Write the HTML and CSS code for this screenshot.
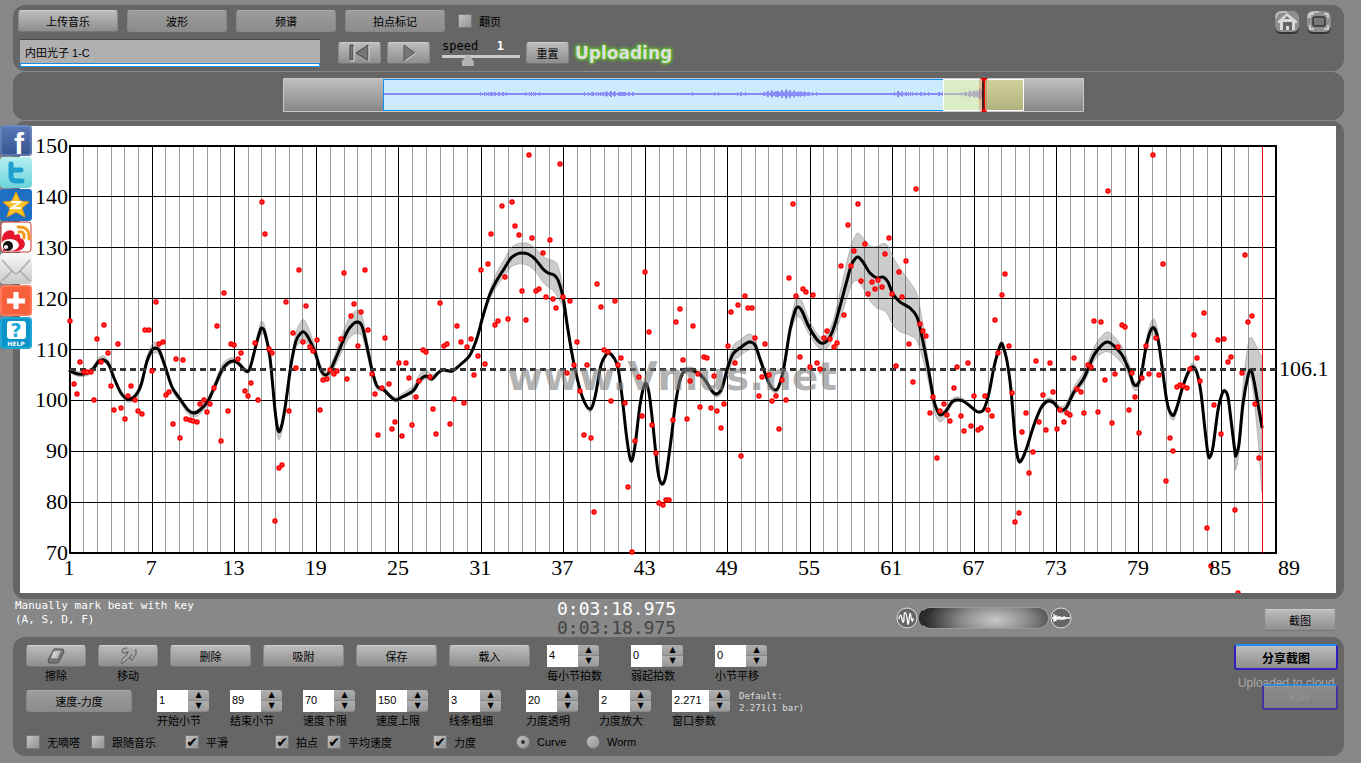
FILE: index.html
```html
<!DOCTYPE html>
<html lang="zh-CN">
<head>
  <meta charset="UTF-8">
  <title>Vmus.net</title>
  <link rel="stylesheet" href="styles.css">
</head>
<body>
<nav class="share">
  <a href="#" aria-label="Facebook">
    <svg viewBox="0 0 32 32">
      <defs><linearGradient id="fb" x2="0" y2="1"><stop offset="0" stop-color="#5c7bb8"/><stop offset="1" stop-color="#34528f"/></linearGradient></defs>
      <rect width="32" height="31" rx="4" fill="url(#fb)"/>
      <rect x="1" y="1" width="30" height="29" rx="3" fill="none" stroke="#7d96c8"/>
      <text x="14" y="29" class="logo-f">f</text>
    </svg>
  </a>
  <a href="#" aria-label="Twitter">
    <svg viewBox="0 0 32 32">
      <defs><linearGradient id="tw" x2="0" y2="1"><stop offset="0" stop-color="#b4eef0"/><stop offset="1" stop-color="#6cd4dc"/></linearGradient></defs>
      <rect width="32" height="31" rx="4" fill="url(#tw)"/>
      <path d="M11 7v12q0 5 5 5h6M11 13h10" fill="none" stroke="#1d9fd0" stroke-width="5" stroke-linecap="round"/>
    </svg>
  </a>
  <a href="#" aria-label="Qzone">
    <svg viewBox="0 0 32 32">
      <rect width="32" height="32" rx="3" fill="#1f6fc4"/>
      <path d="M16 3l4 9 9 1-7 6 3 9-9-5-9 5 3-9-7-6 9-1z" fill="#fcc42c" stroke="#e89a10"/>
      <path d="M11 13h9l-8 6h9" fill="none" stroke="#fff" stroke-width="2"/>
    </svg>
  </a>
  <a href="#" aria-label="Weibo">
    <svg viewBox="0 0 32 32">
      <rect x="1" y="1" width="30" height="30" rx="3" fill="#fff" stroke="#c8342c"/>
      <path d="M2 19C2 10 10 8 13 10c2 1 1 4 2 4 4-2 6 0 5 3 7 2 7 12-3 13H3z" fill="#e6162d"/>
      <ellipse cx="10" cy="24" rx="9" ry="6" fill="#fff"/>
      <circle cx="8" cy="25" r="5" fill="#111"/>
      <circle cx="6" cy="26" r="2" fill="#fff"/>
      <path d="M19 11q6-1 5 6M18 6q12-1 11 12" fill="none" stroke="#f59a1c" stroke-width="3" stroke-linecap="round"/>
    </svg>
  </a>
  <a href="#" aria-label="Email">
    <svg viewBox="0 0 32 32">
      <defs><linearGradient id="ml" x2="0" y2="1"><stop offset="0" stop-color="#fafafa"/><stop offset="1" stop-color="#c8c8c8"/></linearGradient></defs>
      <rect width="32" height="31" rx="4" fill="url(#ml)"/>
      <path d="M2 7l11 12q3 3 6 0L30 7M2 28l10-10M30 28L20 18" fill="none" stroke="#aaa" stroke-width="1.5"/>
    </svg>
  </a>
  <a href="#" aria-label="More">
    <svg viewBox="0 0 32 32">
      <rect width="32" height="31" rx="4" fill="#f8603c"/>
      <rect x="1" y="1" width="30" height="29" rx="3" fill="none" stroke="#ff9478"/>
      <path d="M16 7v17M7 16h18" stroke="#fff" stroke-width="5"/>
    </svg>
  </a>
  <a href="#" aria-label="Help">
    <svg viewBox="0 0 32 32">
      <rect width="32" height="32" rx="4" fill="#0a94c8"/>
      <rect x="1" y="1" width="30" height="30" rx="3" fill="none" stroke="#3ab8e0"/>
      <rect x="7" y="4" width="19" height="18" rx="3" fill="#fff"/>
      <text x="16" y="20" class="logo-q">?</text>
      <text x="16" y="29" class="logo-help">HELP</text>
    </svg>
  </a>
</nav>

<header class="panel top">
  <div class="top-rows">
    <div class="row">
      <button class="btn wide bright">上传音乐</button>
      <button class="btn wide">波形</button>
      <button class="btn wide">频谱</button>
      <button class="btn wide">拍点标记</button>
      <label class="check flip"><input type="checkbox">翻页</label>
    </div>
    <div class="row player">
      <div class="song">
        <input type="text" value="内田光子 1-C" aria-label="曲目">
        <div class="load-bar"></div>
      </div>
      <button class="btn bright play" aria-label="回到开头">
        <svg width="26" height="18" viewBox="0 0 26 18"><path d="M3 1h3v15H3zM21 1v15L9 9z" fill="#777" stroke="#444"/><path d="M7 2v15H3M22 2v15" fill="none" stroke="#ddd"/></svg>
      </button>
      <button class="btn bright play" aria-label="播放">
        <svg width="26" height="18" viewBox="0 0 26 18"><path d="M8 1l11 8-11 8z" fill="#777" stroke="#555"/><path d="M9 17l11-8" stroke="#ddd"/></svg>
      </button>
      <div class="speed">
        <div class="speed-text"><label for="speed">speed</label><b>1</b></div>
        <input id="speed" type="range" min="0" max="3" step="0.1" value="0.9">
      </div>
      <button class="btn bright reset">重置</button>
      <strong class="uploading">Uploading</strong>
    </div>
  </div>
  <div class="tools">
    <button class="tool" aria-label="主页">
      <svg viewBox="0 0 26 24"><rect x="1" y="2" width="24" height="22" rx="6" fill="#333"/><rect x="1" y="1" width="24" height="21" rx="6" fill="#8e8e8e"/><path d="M2 8q0-6 6-6h5" fill="none" stroke="#bbb" stroke-width="2"/><path d="M13 3L4 11v2h2v7h15v-7h2v-2z" fill="#d8d8d8"/><path d="M9 12h9v8h-3v-4h-3v4H9z" fill="#666"/><path d="M13 6l3 3h-6z" fill="#777"/></svg>
    </button>
    <button class="tool" aria-label="全屏">
      <svg viewBox="0 0 26 24"><rect x="1" y="2" width="24" height="22" rx="6" fill="#333"/><rect x="1" y="1" width="24" height="21" rx="6" fill="#8e8e8e"/><path d="M2 8q0-6 6-6h5" fill="none" stroke="#bbb" stroke-width="2"/><rect x="7" y="7" width="12" height="9" rx="2" fill="#777" stroke="#333" stroke-width="1.5"/><path d="M4 8V4h4M18 4h4v4M22 15v4h-4M8 19H4v-4" fill="none" stroke="#ddd" stroke-width="1.5"/></svg>
    </button>
  </div>
</header>

<section class="panel overview">
  <svg id="overview" viewBox="283 78 801 34">
    <defs>
      <linearGradient id="grey" x2="0" y2="1"><stop offset="0" stop-color="#c0c0c0"/><stop offset="1" stop-color="#868686"/></linearGradient>
    </defs>
    <rect x="283" y="78" width="801" height="34" fill="url(#grey)"/>
    <path d="M283 111.500H1083.500V78M283.500 78V112M283 78.500H1084" fill="none" stroke="#c8c8c8"/>
    <rect x="383.500" y="79.500" width="600" height="31" fill="#cdebfe" stroke="#0f93ec"/>
    <path id="wave" stroke="#8a8cf8"/>
    <rect x="943.500" y="79.500" width="80" height="31" fill="#f0f070" fill-opacity=".4" stroke="#fff"/>
    <rect x="979" y="79" width="8" height="32" fill="#e03010" fill-opacity=".25"/>
    <path d="M983 79v33" stroke="#422" stroke-width="2"/>
    <path d="M984.500 79v33" stroke="#e00"/>
    <path d="M980 78h8l-4 4zM980 113h8l-4-5z" fill="#e00"/>
  </svg>
</section>

<main class="panel chart">
  <svg id="chart" viewBox="20 126 1316 467">
    <g id="grid" shape-rendering="crispEdges"></g>
    <path id="band"/>
    <path id="curve"/>
    <path id="mean" d="M70 369.500H1276"/>
    <text class="watermark" x="507" y="390">www.Vmus.net</text>
    <path d="M1262.500 147V553" stroke="#f00" shape-rendering="crispEdges"/>
    <g id="dots"></g>
    <g id="labels"></g>
  </svg>
</main>

<section class="status">
  <p class="hint">Manually mark beat with key<br>(A, S, D, F)</p>
  <div class="clock"><span>0:03:18.975</span><span class="total">0:03:18.975</span></div>
  <div class="status-right">
    <div class="zoom">
      <svg width="22" height="24" viewBox="0 0 22 24"><circle cx="11" cy="12" r="10" fill="#666" stroke="#ddd"/><path d="M3 13c1-5 2-5 3 0s2 4 2-2 2-6 3 1 1 9 2 2 1-9 2-3 2 5 2 1" fill="none" stroke="#fff" stroke-width="1.300"/></svg>
      <div class="wheel"></div>
      <svg width="22" height="24" viewBox="0 0 22 24"><circle cx="11" cy="12" r="10" fill="#666" stroke="#ddd"/><path d="M2 12h18M4 8v8M5 10v5M6 9v6M8 10v4M10 10v4M12 11v3M14 10v4M16 11v2" stroke="#fff" stroke-width="1.300"/></svg>
    </div>
    <button class="btn bright snap">截图</button>
  </div>
</section>

<footer class="panel controls">
  <div class="settings">
    <div class="row edit">
      <div class="field center">
        <button id="erase" class="btn bright small" aria-label="擦除"><svg width="20" height="16" viewBox="0 0 20 16"><path d="M8 1h9l1 3-5 10-2 1H3l-1-3z" fill="#777" stroke="#555"/><path d="M8 2h8l-4 9H4z" fill="#bbb" stroke="#666"/><path d="M7 4h5l-3 6H5z" fill="#ccc"/></svg></button>
        <label for="erase">擦除</label>
      </div>
      <div class="field center">
        <button id="move" class="btn bright small" aria-label="移动"><svg width="20" height="18" viewBox="0 0 20 18"><path d="M9 1Q4 1 4 4t3 2q3 0 3-1 0 3-5 6-2 2-1 6 1 0 3-3l5-4q0 4 2 3l4-6V2z" fill="#a8a8a8"/><path d="M9 1Q4 1 4 4t3 2q3 0 3-2M10 5q0 3-5 6-2 2-1 6 1 0 3-3l5-4q0 4 2 3l4-6V2M12 10l2-3" fill="none" stroke="#5a5a5a"/></svg></button>
        <label for="move">移动</label>
      </div>
      <button class="btn bright medium">删除</button>
      <button class="btn bright medium">吸附</button>
      <button class="btn bright medium">保存</button>
      <button class="btn bright medium">载入</button>
      <div class="spins loose">
        <div class="field"><span class="spin"><input id="beats" type="number" value="4"><span class="steps"><button>▲</button><button>▼</button></span></span><label for="beats">每小节拍数</label></div>
        <div class="field"><span class="spin"><input id="pickup" type="number" value="0"><span class="steps"><button>▲</button><button>▼</button></span></span><label for="pickup">弱起拍数</label></div>
        <div class="field"><span class="spin"><input id="shift" type="number" value="0"><span class="steps"><button>▲</button><button>▼</button></span></span><label for="shift">小节平移</label></div>
      </div>
    </div>
    <div class="row ranges">
      <button class="btn mode">速度-力度</button>
      <div class="spins">
        <div class="field"><span class="spin"><input id="start" type="number" value="1"><span class="steps"><button>▲</button><button>▼</button></span></span><label for="start">开始小节</label></div>
        <div class="field"><span class="spin"><input id="end" type="number" value="89"><span class="steps"><button>▲</button><button>▼</button></span></span><label for="end">结束小节</label></div>
        <div class="field"><span class="spin"><input id="low" type="number" value="70"><span class="steps"><button>▲</button><button>▼</button></span></span><label for="low">速度下限</label></div>
        <div class="field"><span class="spin"><input id="high" type="number" value="150"><span class="steps"><button>▲</button><button>▼</button></span></span><label for="high">速度上限</label></div>
        <div class="field"><span class="spin"><input id="line" type="number" value="3"><span class="steps"><button>▲</button><button>▼</button></span></span><label for="line">线条粗细</label></div>
      </div>
      <div class="spins">
        <div class="field"><span class="spin"><input id="alpha" type="number" value="20"><span class="steps"><button>▲</button><button>▼</button></span></span><label for="alpha">力度透明</label></div>
        <div class="field"><span class="spin"><input id="scale" type="number" value="2"><span class="steps"><button>▲</button><button>▼</button></span></span><label for="scale">力度放大</label></div>
        <div class="field"><span class="spin long"><input id="window" type="number" step="any" value="2.271"><span class="steps"><button>▲</button><button>▼</button></span></span><label for="window">窗口参数</label></div>
      </div>
      <p class="default">Default:<br>2.271(1 bar)</p>
    </div>
    <div class="options">
      <label class="check"><input type="checkbox">无嘀嗒</label>
      <label class="check"><input type="checkbox">跟随音乐</label>
      <label class="check"><input type="checkbox" checked>平滑</label>
      <label class="check"><input type="checkbox" checked>拍点</label>
      <label class="check"><input type="checkbox" checked>平均速度</label>
      <label class="check"><input type="checkbox" checked>力度</label>
      <label class="check"><input type="radio" name="view" checked>Curve</label>
      <label class="check"><input type="radio" name="view">Worm</label>
    </div>
  </div>
  <div class="cloud">
    <button class="btn bright share-shot">分享截图</button>
    <span class="cloud-text">Uploaded to cloud.</span>
    <button class="btn ioi" disabled>iOI+</button>
  </div>
</footer>

<script src="chart.js"></script>
</body>
</html>
```

FILE: styles.css
```css
* {
  box-sizing: border-box;
}
body {
  margin: 0;
  padding: 5px 17px 7px 13px;
  background: #888;
  color: #000;
  font-family: "Liberation Sans", "Noto Sans CJK SC", sans-serif;
  font-size: 11px;
}
p {
  margin: 0;
}
button, input {
  font: inherit;
  color: inherit;
}
.panel {
  background: #666;
  border-radius: 12px;
  margin-bottom: 1px;
}
.row {
  display: flex;
}

/* Buttons */
.btn {
  height: 22px;
  padding: 0;
  border: 1px solid #888;
  border-top-color: #aaa;
  border-radius: 3px;
  background: linear-gradient(#9c9c9c, #8c8c8c);
  white-space: nowrap;
}
.btn.bright {
  border-top-color: #ccc;
  border-bottom-color: #777;
  background: linear-gradient(#bcbcbc, #8e8e8e);
}
.btn svg {
  display: block;
  margin: 0 auto;
}
.wide { width: 100px; }
.medium { width: 81px; }
.small { width: 60px; }
.play, .reset { width: 43px; }
.snap { width: 72px; }
.mode { width: 106px; }

/* Check boxes and radios */
.check {
  display: flex;
  align-items: center;
  gap: 7px;
  white-space: nowrap;
}
.check input {
  appearance: none;
  width: 14px;
  height: 14px;
  margin: 0;
  border: 1px solid #777;
  background: linear-gradient(135deg, #c4c4c4, #929292);
  display: grid;
  place-items: center;
}
.check input[type=radio] {
  border-radius: 50%;
}
.check input[type=checkbox]:checked::before {
  content: "✔";
  font: 14px/12px "DejaVu Sans", sans-serif;
  color: #000;
}
.check input[type=radio]:checked::before {
  content: "";
  width: 4px;
  height: 4px;
  border-radius: 50%;
  background: #333;
}

/* Top panel */
.top {
  display: flex;
  justify-content: space-between;
  padding: 5px 12px 4px 5px;
}
.top-rows {
  display: flex;
  flex-direction: column;
  gap: 7px;
}
.top .row {
  gap: 9px;
}
.flip {
  margin-left: 4px;
}
.top .player {
  align-items: center;
  gap: 6px;
  padding-left: 2px;
  height: 28px;
}
.song {
  width: 300px;
  margin-right: 12px;
}
.song input {
  display: block;
  width: 100%;
  height: 24px;
  padding: 0 5px;
  border: 0;
  border-top: 1px solid #444;
  background: #b0b0b0;
}
.load-bar {
  height: 4px;
  border: 1px solid #1090f0;
  background: #fff;
}
.speed {
  width: 78px;
  margin: 0 0 0 6px;
}
.speed-text {
  display: flex;
  justify-content: space-between;
  padding-right: 16px;
  font: 12px/14px "DejaVu Sans Mono", monospace;
}
.speed-text b {
  color: #fff;
}
.speed input {
  display: block;
  appearance: none;
  width: 100%;
  height: 14px;
  margin: 0;
  background: linear-gradient(#ccc, #ccc) 0 2px / 100% 3px no-repeat;
}
.speed input::-webkit-slider-thumb {
  appearance: none;
  width: 12px;
  height: 12px;
  background: #b4b4b4;
  clip-path: polygon(50% 0, 100% 60%, 100% 100%, 0 100%, 0 60%);
}
.uploading {
  font: bold 17px/24px "DejaVu Sans", sans-serif;
  color: #ddd;
  text-shadow: 0 0 3px #5fce20, 0 0 3px #5fce20, 0 0 4px #5fce20;
}
.tools {
  display: flex;
  gap: 6px;
}
.tool {
  width: 26px;
  height: 24px;
  padding: 0;
  border: 0;
  background: none;
}
.tool svg {
  display: block;
}

/* Overview strip */
.overview {
  display: grid;
  grid-template-columns: 270fr 801fr 260fr;
  padding: 6px 0 8px;
}
.overview svg {
  display: block;
  grid-column: 2;
  width: 100%;
}

/* Chart */
.chart {
  margin: 0;
  padding: 5px 8px 6px 7px;
}
.chart svg {
  display: block;
  width: 100%;
  background: #fff;
}
#grid line { stroke: #999; }
#grid .major { stroke: #000; }
#grid rect { fill: none; stroke: #000; stroke-width: 2px; }
#band { fill: #000; fill-opacity: .2; stroke: #999; stroke-opacity: .6; }
#curve { fill: none; stroke: #000; stroke-width: 3px; stroke-linecap: round; }
#mean { stroke: #333; stroke-width: 3px; stroke-dasharray: 6 4; }
#dots circle { fill: #f99; stroke: #f00; stroke-width: 2px; }
#labels text { font-family: "Liberation Serif", serif; font-size: 22px; }
.watermark {
  font: bold 39px "DejaVu Sans", sans-serif;
  fill: #808080;
  fill-opacity: .6;
}

/* Social links over the page edge */
.share {
  position: absolute;
  left: 0;
  top: 125px;
  width: 32px;
}
.share a, .share svg {
  display: block;
  width: 32px;
  height: 32px;
}
.logo-f {
  font: bold 30px "Liberation Sans", sans-serif;
  fill: #fff;
}
.logo-q {
  font: bold 19px "DejaVu Sans", sans-serif;
  fill: #1caadc;
  text-anchor: middle;
}
.logo-help {
  font: bold 6px "DejaVu Sans", sans-serif;
  fill: #fff;
  text-anchor: middle;
}

/* Status row */
.status {
  display: grid;
  grid-template-columns: 544fr 339fr 448fr;
  height: 38px;
}
.hint {
  padding-left: 2px;
  color: #fff;
  font: 11px/14px "DejaVu Sans Mono", monospace;
}
.clock {
  display: flex;
  flex-direction: column;
  color: #fff;
  font: 18px/19px "DejaVu Sans Mono", monospace;
}
.clock .total {
  color: #444;
}
.status-right {
  display: flex;
  justify-content: space-between;
  align-items: center;
  padding-right: 8px;
}
.zoom {
  display: flex;
  align-items: center;
  gap: 1px;
}
.wheel {
  width: 130px;
  height: 22px;
  border: 1px solid #999;
  border-left-color: #222;
  border-radius: 11px;
  background: radial-gradient(ellipse 70px 30px at 75px 12px, #c8c8c8, #888 50%, #2c2c2c);
}
.snap {
  margin-top: 4px;
}

/* Bottom controls */
.controls {
  display: flex;
  justify-content: space-between;
  margin: 0;
  padding: 8px 6px 7px 13px;
}
.settings {
  display: flex;
  flex-direction: column;
}
.settings .row {
  height: 45px;
}
.edit {
  gap: 12px;
}
.field {
  display: flex;
  flex-direction: column;
  width: 52px;
}
.field label {
  line-height: 18px;
  white-space: nowrap;
}
.field.center {
  width: 60px;
  align-items: center;
}
.spins {
  display: flex;
  gap: 21px;
}
.spins.loose {
  gap: 32px;
  margin-left: 5px;
}
.spin {
  display: flex;
  width: 52px;
  height: 22px;
}
.spin.long {
  width: 58px;
}
.spin input {
  appearance: textfield;
  flex: 1;
  min-width: 0;
  padding: 0 0 3px 2px;
  border: 0;
  background: #fff;
}
.spin input::-webkit-inner-spin-button {
  display: none;
}
.steps {
  display: flex;
  flex-direction: column;
  width: 21px;
}
.steps button {
  flex: 1;
  height: 11px;
  padding: 0;
  border: 0;
  border-bottom: 1px solid #888;
  border-radius: 0 3px 0 0;
  background: linear-gradient(#b0b0b0, #9a9a9a);
  font: 8px/10px "DejaVu Sans", sans-serif;
}
.steps button + button {
  border-radius: 0 0 3px 0;
}
.ranges {
  gap: 25px;
}
.default {
  margin-left: -10px;
  color: #ddd;
  font: 9px/12px "DejaVu Sans Mono", monospace;
}
.options {
  display: grid;
  grid-template-columns: 65px 94px 90px 52px 106px 83px 70px auto;
  grid-auto-rows: 14px;
}
.cloud {
  display: flex;
  flex-direction: column;
  align-items: flex-end;
}
.btn.share-shot, .btn.ioi {
  height: 26px;
  border: 2px solid #3020c0;
  border-top-color: #2090f8;
}
.btn.share-shot {
  width: 104px;
  margin-top: -1px;
  font-size: 12px;
  font-weight: bold;
}
.cloud-text {
  margin-top: 6px;
  color: #aaa;
  font-size: 12px;
  line-height: 14px;
}
.btn.ioi {
  width: 76px;
  margin-top: -6px;
  color: #aaa;
  opacity: .7;
}
```

FILE: chart.js
```javascript
const NS = 'http://www.w3.org/2000/svg';
const LEFT = 70, TOP = 146, RIGHT = 1276, BOTTOM = 553;
const barX = bar => LEFT + (bar - 1) * (RIGHT - LEFT) / 88;

// one "x,y" per marked beat
const beats = `70,321 74,384 77,394 80,362 84,372 87,372 91,372 94,400 97,339 101,362 104,325 108,353
111,386 114,410 118,344 121,408 125,419 128,396 131,386 135,400 138,411 142,414 145,330 149,330
152,371 156,302 159,344 163,342 166,395 169,392 173,424 176,359 180,438 183,360 186,419 190,420
193,421 197,422 200,404 204,400 207,412 210,404 214,388 217,326 221,441 224,293 228,411 231,344
234,345 238,359 241,353 245,391 248,396 251,383 255,343 258,400 262,202 265,234 269,349 272,353
275,521 279,468 282,465 286,302 289,411 293,333 296,368 299,270 303,342 306,306 310,347 313,351
317,340 320,410 323,380 327,379 330,370 334,374 337,371 341,339 344,273 347,379 351,316 354,304
358,346 361,312 365,270 368,330 372,374 375,394 378,435 382,388 385,338 389,384 392,429 395,422
399,363 402,436 406,363 409,378 412,425 416,397 419,381 423,350 426,352 430,377 433,409 436,434
440,303 444,346 447,344 450,424 454,399 457,326 461,342 464,403 467,347 471,339 474,375 478,356
481,270 485,364 488,264 491,234 495,325 498,321 502,206 505,277 508,319 512,202 515,226 519,235
522,291 526,320 529,155 532,238 536,291 539,289 543,253 546,297 550,240 553,299 556,308 560,164
563,297 567,373 570,301 574,365 577,342 580,391 584,435 587,365 591,438 594,512 597,284 601,307
604,350 608,352 611,401 615,301 618,365 621,358 625,403 628,487 632,552 635,441 639,377 642,416
645,272 649,332 652,425 656,453 659,503 663,505 666,500 669,500 673,420 676,322 680,309 683,360
687,419 690,381 693,326 698,374 700,407 704,357 707,358 711,408 714,376 717,411 721,428 724,404
728,346 731,312 735,363 738,305 741,456 745,296 748,308 752,308 755,338 759,396 762,377 765,344
769,375 772,401 776,396 779,429 782,380 786,400 789,278 793,204 796,296 800,357 803,289 806,292
810,367 813,295 817,363 820,369 824,338 827,331 830,339 834,347 837,343 841,266 844,315 848,225
851,266 854,251 858,204 861,281 865,244 868,294 872,282 875,289 878,280 882,287 885,254 889,238
892,294 896,366 899,272 902,297 906,261 909,344 913,382 916,189 920,324 923,331 926,336 930,413
933,397 937,458 940,411 944,404 947,415 950,421 954,388 957,367 961,416 964,431 968,363 971,426
974,396 978,430 981,428 985,396 988,410 992,416 995,320 998,353 1002,295 1005,274 1009,346 1012,393
1015,522 1019,513 1022,432 1026,413 1029,473 1033,452 1036,361 1039,422 1043,395 1046,430 1050,363 1053,392
1057,429 1060,410 1064,422 1067,413 1070,415 1074,358 1077,389 1081,392 1084,413 1088,365 1091,367 1094,321
1098,412 1101,322 1105,380 1108,191 1112,423 1115,374 1118,347 1122,325 1125,327 1129,410 1132,373 1135,397
1139,433 1142,378 1146,346 1149,374 1153,155 1156,338 1159,375 1163,264 1166,481 1170,438 1173,451 1177,387
1180,385 1183,386 1187,388 1190,369 1194,335 1197,358 1200,381 1204,313 1207,528 1211,566 1214,405 1218,340
1221,434 1224,339 1228,362 1231,357 1235,510 1238,593 1242,373 1245,255 1248,322 1252,316 1255,404 1259,458`;

// smoothed tempo
const tempo = `70,371 78,374 87,373 93,369 99,361 104,360 109,365 114,378 121,393 128,399 135,396 141,385 147,361
152,350 155,348 159,350 165,366 172,387 180,399 188,410 194,413 200,410 208,401 214,388 222,370 228,363 234,361
239,364 246,371 250,368 256,345 260,331 262,328 265,333 270,358 275,410 278,430 281,428 285,408 291,365 296,341
301,333 304,332 308,337 315,352 320,368 325,375 330,371 338,353 347,332 353,324 358,322 362,326 366,342 372,370
377,386 384,390 391,397 396,400 402,397 408,394 414,390 420,380 426,376 432,379 438,373 443,370 452,371 460,365
470,355 477,338 483,316 490,294 497,280 504,269 511,258 517,254 522,253 528,254 535,259 543,269 548,273 554,275
558,280 563,297 568,330 574,364 582,396 590,409 595,397 601,365 606,355 609,353 614,358 618,368 622,396 627,440
631,461 635,446 640,405 645,384 649,393 653,426 658,472 662,484 666,475 671,440 675,407 680,380 686,370 698,373
705,380 712,391 717,394 722,388 727,370 733,354 740,348 749,342 755,345 760,359 765,373 770,385 776,390 780,383
784,367 790,330 795,311 798,307 802,311 808,325 815,337 821,343 827,341 833,330 839,310 846,284 851,266 855,259
858,257 863,262 870,273 877,278 883,277 888,282 893,294 900,302 910,308 917,317 922,337 928,367 934,401 938,412
941,415 946,411 952,402 957,400 963,401 970,406 976,411 980,412 984,409 989,393 994,367 998,352 1001,344 1003,346
1007,361 1011,390 1015,438 1018,459 1021,461 1026,450 1034,425 1041,408 1048,401 1054,403 1060,410 1066,408
1074,392 1084,378 1094,355 1103,344 1108,342 1113,345 1122,355 1129,370 1133,383 1137,385 1141,376 1146,347
1150,332 1154,328 1158,339 1162,366 1167,402 1172,415 1176,410 1183,386 1189,371 1193,367 1197,373 1201,393
1205,430 1208,454 1210,457 1213,447 1218,410 1222,394 1225,391 1228,397 1231,420 1235,452 1236,455 1239,444
1243,404 1248,376 1251,370 1254,381 1258,404 1262,427`;

// loudness: x, distance above, distance below
const loudness = `70,2,2 93,3,3 104,4,2 128,1,3 155,6,5 165,3,3 194,2,4 222,5,4 234,3,2 250,2,2 262,7,6 270,3,3
278,2,8 290,4,4 303,13,10 315,6,5 325,3,3 345,9,9 358,12,12 368,7,7 380,1,2 408,4,2 424,7,3 440,1,1 470,1,1
490,4,5 497,8,6 510,10,9 522,10,11 535,11,12 548,14,14 558,14,18 568,4,4 580,1,1 590,1,3 608,2,1 700,3,2 717,2,3
733,8,8 749,8,8 760,4,4 776,1,3 790,6,6 798,11,10 810,7,7 821,6,6 833,9,8 846,18,17 858,24,24 867,25,27 875,31,29
882,33,33 888,36,33 893,37,31 903,32,29 912,24,27 920,22,22 928,8,12 938,3,8 946,3,5 957,3,1 980,1,1 1002,3,1
1054,3,2 1094,8,6 1107,10,10 1120,9,9 1130,6,6 1136,3,5 1146,5,5 1154,9,7 1165,4,4 1172,2,5 1193,4,2 1205,2,2
1225,2,2 1231,3,5 1236,2,14 1241,12,5 1247,31,3 1252,33,10 1257,50,28 1262,70,66`;

const parse = text => text.trim().split(/\s+/).map(item => item.split(',').map(Number));

function add(parent, tag, attrs, text) {
  const el = document.createElementNS(NS, tag);
  for (const key in attrs) el.setAttribute(key, attrs[key]);
  if (text) el.textContent = text;
  document.getElementById(parent).appendChild(el);
}

// Catmull-Rom spline as bezier segments
function spline(pts) {
  let d = '';
  for (let i = 0; i < pts.length - 1; i++) {
    const a = pts[i - 1] || pts[i], b = pts[i], c = pts[i + 1], e = pts[i + 2] || c;
    d += `C${b[0] + (c[0] - a[0]) / 6} ${b[1] + (c[1] - a[1]) / 6} ${c[0] - (e[0] - b[0]) / 6} ${c[1] - (e[1] - b[1]) / 6} ${c[0]} ${c[1]}`;
  }
  return d;
}

function spread(x, rows, side) {
  const i = Math.max(1, rows.findIndex(row => row[0] >= x));
  const a = rows[i - 1], b = rows[i];
  return a[side] + (b[side] - a[side]) * (x - a[0]) / (b[0] - a[0]);
}

for (let bar = 2; bar < 89; bar++) {
  if (bar % 6 !== 1) add('grid', 'line', { x1: barX(bar), x2: barX(bar), y1: TOP, y2: BOTTOM });
}
for (let bar = 1; bar < 89; bar += 6) {
  if (bar > 1) add('grid', 'line', { class: 'major', x1: barX(bar), x2: barX(bar), y1: TOP, y2: BOTTOM });
  add('labels', 'text', { x: barX(bar) - 1, y: 575, 'text-anchor': 'middle' }, String(bar));
}
add('labels', 'text', { x: 1278, y: 575 }, '89');
add('labels', 'text', { x: 1279, y: 376 }, '106.1');
for (let bpm = 70; bpm <= 150; bpm += 10) {
  const y = BOTTOM - (bpm - 70) * (BOTTOM - TOP) / 80;
  add('grid', 'line', { class: 'major', x1: LEFT, x2: RIGHT, y1: y, y2: y });
  add('labels', 'text', { x: 68, y: y + 7, 'text-anchor': 'end' }, String(bpm));
}
add('grid', 'rect', { x: LEFT, y: TOP, width: RIGHT - LEFT, height: BOTTOM - TOP });

const line = parse(tempo);
const loud = parse(loudness);
const upper = line.map(([x, y]) => [x, y - spread(x, loud, 1)]);
const lower = line.map(([x, y]) => [x, y + spread(x, loud, 2)]).reverse();
document.getElementById('curve').setAttribute('d', `M${line[0]}` + spline(line));
document.getElementById('band').setAttribute('d', `M${upper[0]}` + spline(upper) + `L${lower[0]}` + spline(lower) + 'Z');
parse(beats).forEach(([cx, cy]) => add('dots', 'circle', { cx, cy, r: 1.7 }));

// waveform: louder stretches as x, half height
const loudParts = parse(`383,1 430,1 475,1 490,3 505,2 520,1 535,3 545,1 575,1 600,3 625,3 640,1 670,1 690,2 700,1
715,2 725,1 740,2 760,1 770,4 785,5 800,4 810,2 830,1 890,1 897,3 920,2 940,2 955,1 965,3 975,5 980,8 983,10`);
let wave = '';
for (let x = 384; x < 983; x++) {
  const noise = Math.abs(Math.sin(x * 2.3) * Math.cos(x * 0.7));
  const h = Math.max(1, Math.round(spread(x, loudParts, 1) * (0.4 + 0.6 * noise)));
  wave += `M${x + 0.5} ${94 - h}v${2 * h}`;
}
document.getElementById('wave').setAttribute('d', wave);
```
